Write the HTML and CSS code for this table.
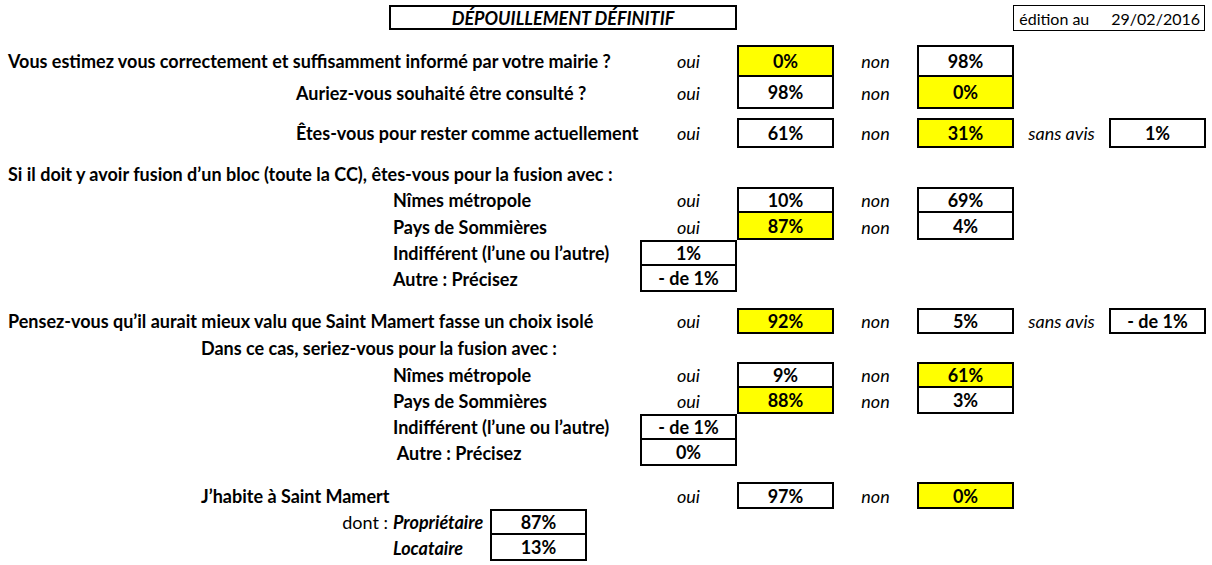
FILE: index.html
```html
<!DOCTYPE html>
<html lang="fr">
<head>
<meta charset="utf-8">
<title>Dépouillement définitif</title>
<link rel="stylesheet" href="styles.css">
</head>
<body>
<div class="sheet">
  <div class="header">
    <div></div>
    <div class="title-box">DÉPOUILLEMENT DÉFINITIF</div>
    <div></div>
    <div class="edition-box"><span>édition au</span><span>29/02/2016</span></div>
  </div>

  <div class="row h32 mt15">
    <div class="label p8">Vous estimez vous correctement et suffisamment informé par votre mairie ?</div>
    <div class="tag">oui</div>
    <div class="box yellow">0%</div>
    <div class="tag">non</div>
    <div class="box">98%</div>
  </div>
  <div class="row h32">
    <div class="label p296">Auriez-vous souhaité être consulté ?</div>
    <div class="tag">oui</div>
    <div class="box cont">98%</div>
    <div class="tag">non</div>
    <div class="box yellow cont">0%</div>
  </div>
  <div class="row h30 mt9">
    <div class="label p296">Êtes-vous pour rester comme actuellement</div>
    <div class="tag">oui</div>
    <div class="box">61%</div>
    <div class="tag">non</div>
    <div class="box yellow">31%</div>
    <div class="tag">sans avis</div>
    <div class="box">1%</div>
  </div>

  <div class="row h26 mt13">
    <div class="label p8 wide">Si il doit y avoir fusion d’un bloc (toute la CC), êtes-vous pour la fusion avec :</div>
  </div>
  <div class="row h26">
    <div class="label p393">Nîmes métropole</div>
    <div class="tag">oui</div>
    <div class="box">10%</div>
    <div class="tag">non</div>
    <div class="box">69%</div>
  </div>
  <div class="row h27">
    <div class="label p393">Pays de Sommières</div>
    <div class="tag">oui</div>
    <div class="box yellow cont">87%</div>
    <div class="tag">non</div>
    <div class="box cont">4%</div>
  </div>
  <div class="row h26">
    <div class="label p393">Indifférent (l’une ou l’autre)</div>
    <div class="box">1%</div>
  </div>
  <div class="row h26">
    <div class="label p393">Autre : Précisez</div>
    <div class="box cont">- de 1%</div>
  </div>

  <div class="row h26 mt16">
    <div class="label p8">Pensez-vous qu’il aurait mieux valu que Saint Mamert fasse un choix isolé</div>
    <div class="tag">oui</div>
    <div class="box yellow">92%</div>
    <div class="tag">non</div>
    <div class="box">5%</div>
    <div class="tag">sans avis</div>
    <div class="box">- de 1%</div>
  </div>
  <div class="row h28">
    <div class="label p202">Dans ce cas, seriez-vous pour la fusion avec :</div>
  </div>
  <div class="row h26">
    <div class="label p393">Nîmes métropole</div>
    <div class="tag">oui</div>
    <div class="box">9%</div>
    <div class="tag">non</div>
    <div class="box yellow">61%</div>
  </div>
  <div class="row h26">
    <div class="label p393">Pays de Sommières</div>
    <div class="tag">oui</div>
    <div class="box yellow cont">88%</div>
    <div class="tag">non</div>
    <div class="box cont">3%</div>
  </div>
  <div class="row h26">
    <div class="label p393">Indifférent (l’une ou l’autre)</div>
    <div class="box">- de 1%</div>
  </div>
  <div class="row h26">
    <div class="label p393">&nbsp;Autre : Précisez</div>
    <div class="box cont">0%</div>
  </div>

  <div class="row h27 mt16">
    <div class="label p202">J’habite à Saint Mamert</div>
    <div class="tag">oui</div>
    <div class="box">97%</div>
    <div class="tag">non</div>
    <div class="box yellow">0%</div>
  </div>
  <div class="sub h26">
    <div class="dont">dont :</div>
    <div class="sublabel">Propriétaire</div>
    <div class="box">87%</div>
  </div>
  <div class="sub h26">
    <div class="dont"></div>
    <div class="sublabel">Locataire</div>
    <div class="box cont">13%</div>
  </div>
</div>
</body>
</html>
```

FILE: styles.css
```css
* { box-sizing: border-box; }

html, body {
  margin: 0;
  padding: 0;
  background: #ffffff;
}

body {
  font-family: "Lato", "Open Sans", "Liberation Sans", sans-serif;
  font-size: 18px;
  color: #000000;
}

.sheet {
  width: 1212px;
  padding-top: 5px;
}

.header {
  display: grid;
  grid-template-columns: 389px 348px 276px 192px;
  height: 25px;
}

.title-box {
  border: 2px solid #000;
  font-weight: 700;
  font-style: italic;
  display: flex;
  align-items: center;
  justify-content: center;
  height: 25px;
  white-space: nowrap;
}

.edition-box {
  border: 1px solid #000;
  display: flex;
  align-items: center;
  justify-content: flex-end;
  gap: 22px;
  padding-right: 4px;
  height: 26px;
  font-size: 16px;
  white-space: nowrap;
}

.row {
  display: grid;
  grid-template-columns: 640px 97px 97px 83px 97px 95px 97px;
}

.row > div, .sub > div {
  display: flex;
  align-items: center;
  height: 100%;
  white-space: nowrap;
}

.label {
  font-weight: 700;
  grid-column: 1;
}

.label.wide { grid-column: 1 / -1; }

.p8 { padding-left: 8px; }
.p202 { padding-left: 201px; }
.p296 { padding-left: 296px; }
.p393 { padding-left: 393px; }

.tag {
  font-style: italic;
  justify-content: center;
}

.box {
  border: 2px solid #000;
  font-weight: 700;
  justify-content: center;
  background: #ffffff;
}

.box.cont { border-top: 0; }

.box.yellow { background: #ffff00; }

/* boxes in column B when there is no "oui" tag before them */
.row > .label + .box { grid-column: 2; }

.h26 { height: 26px; }
.h27 { height: 27px; }
.h28 { height: 28px; }
.h30 { height: 30px; }
.h32 { height: 32px; }

.mt9 { margin-top: 9px; }
.mt13 { margin-top: 13px; }
.mt15 { margin-top: 15px; }
.mt16 { margin-top: 16px; }

.sub {
  display: grid;
  grid-template-columns: 393px 97px 97px;
}

.sub > .dont {
  font-weight: 400;
  justify-content: flex-end;
  padding-right: 5px;
}

.sublabel {
  font-weight: 700;
  font-style: italic;
}
```
